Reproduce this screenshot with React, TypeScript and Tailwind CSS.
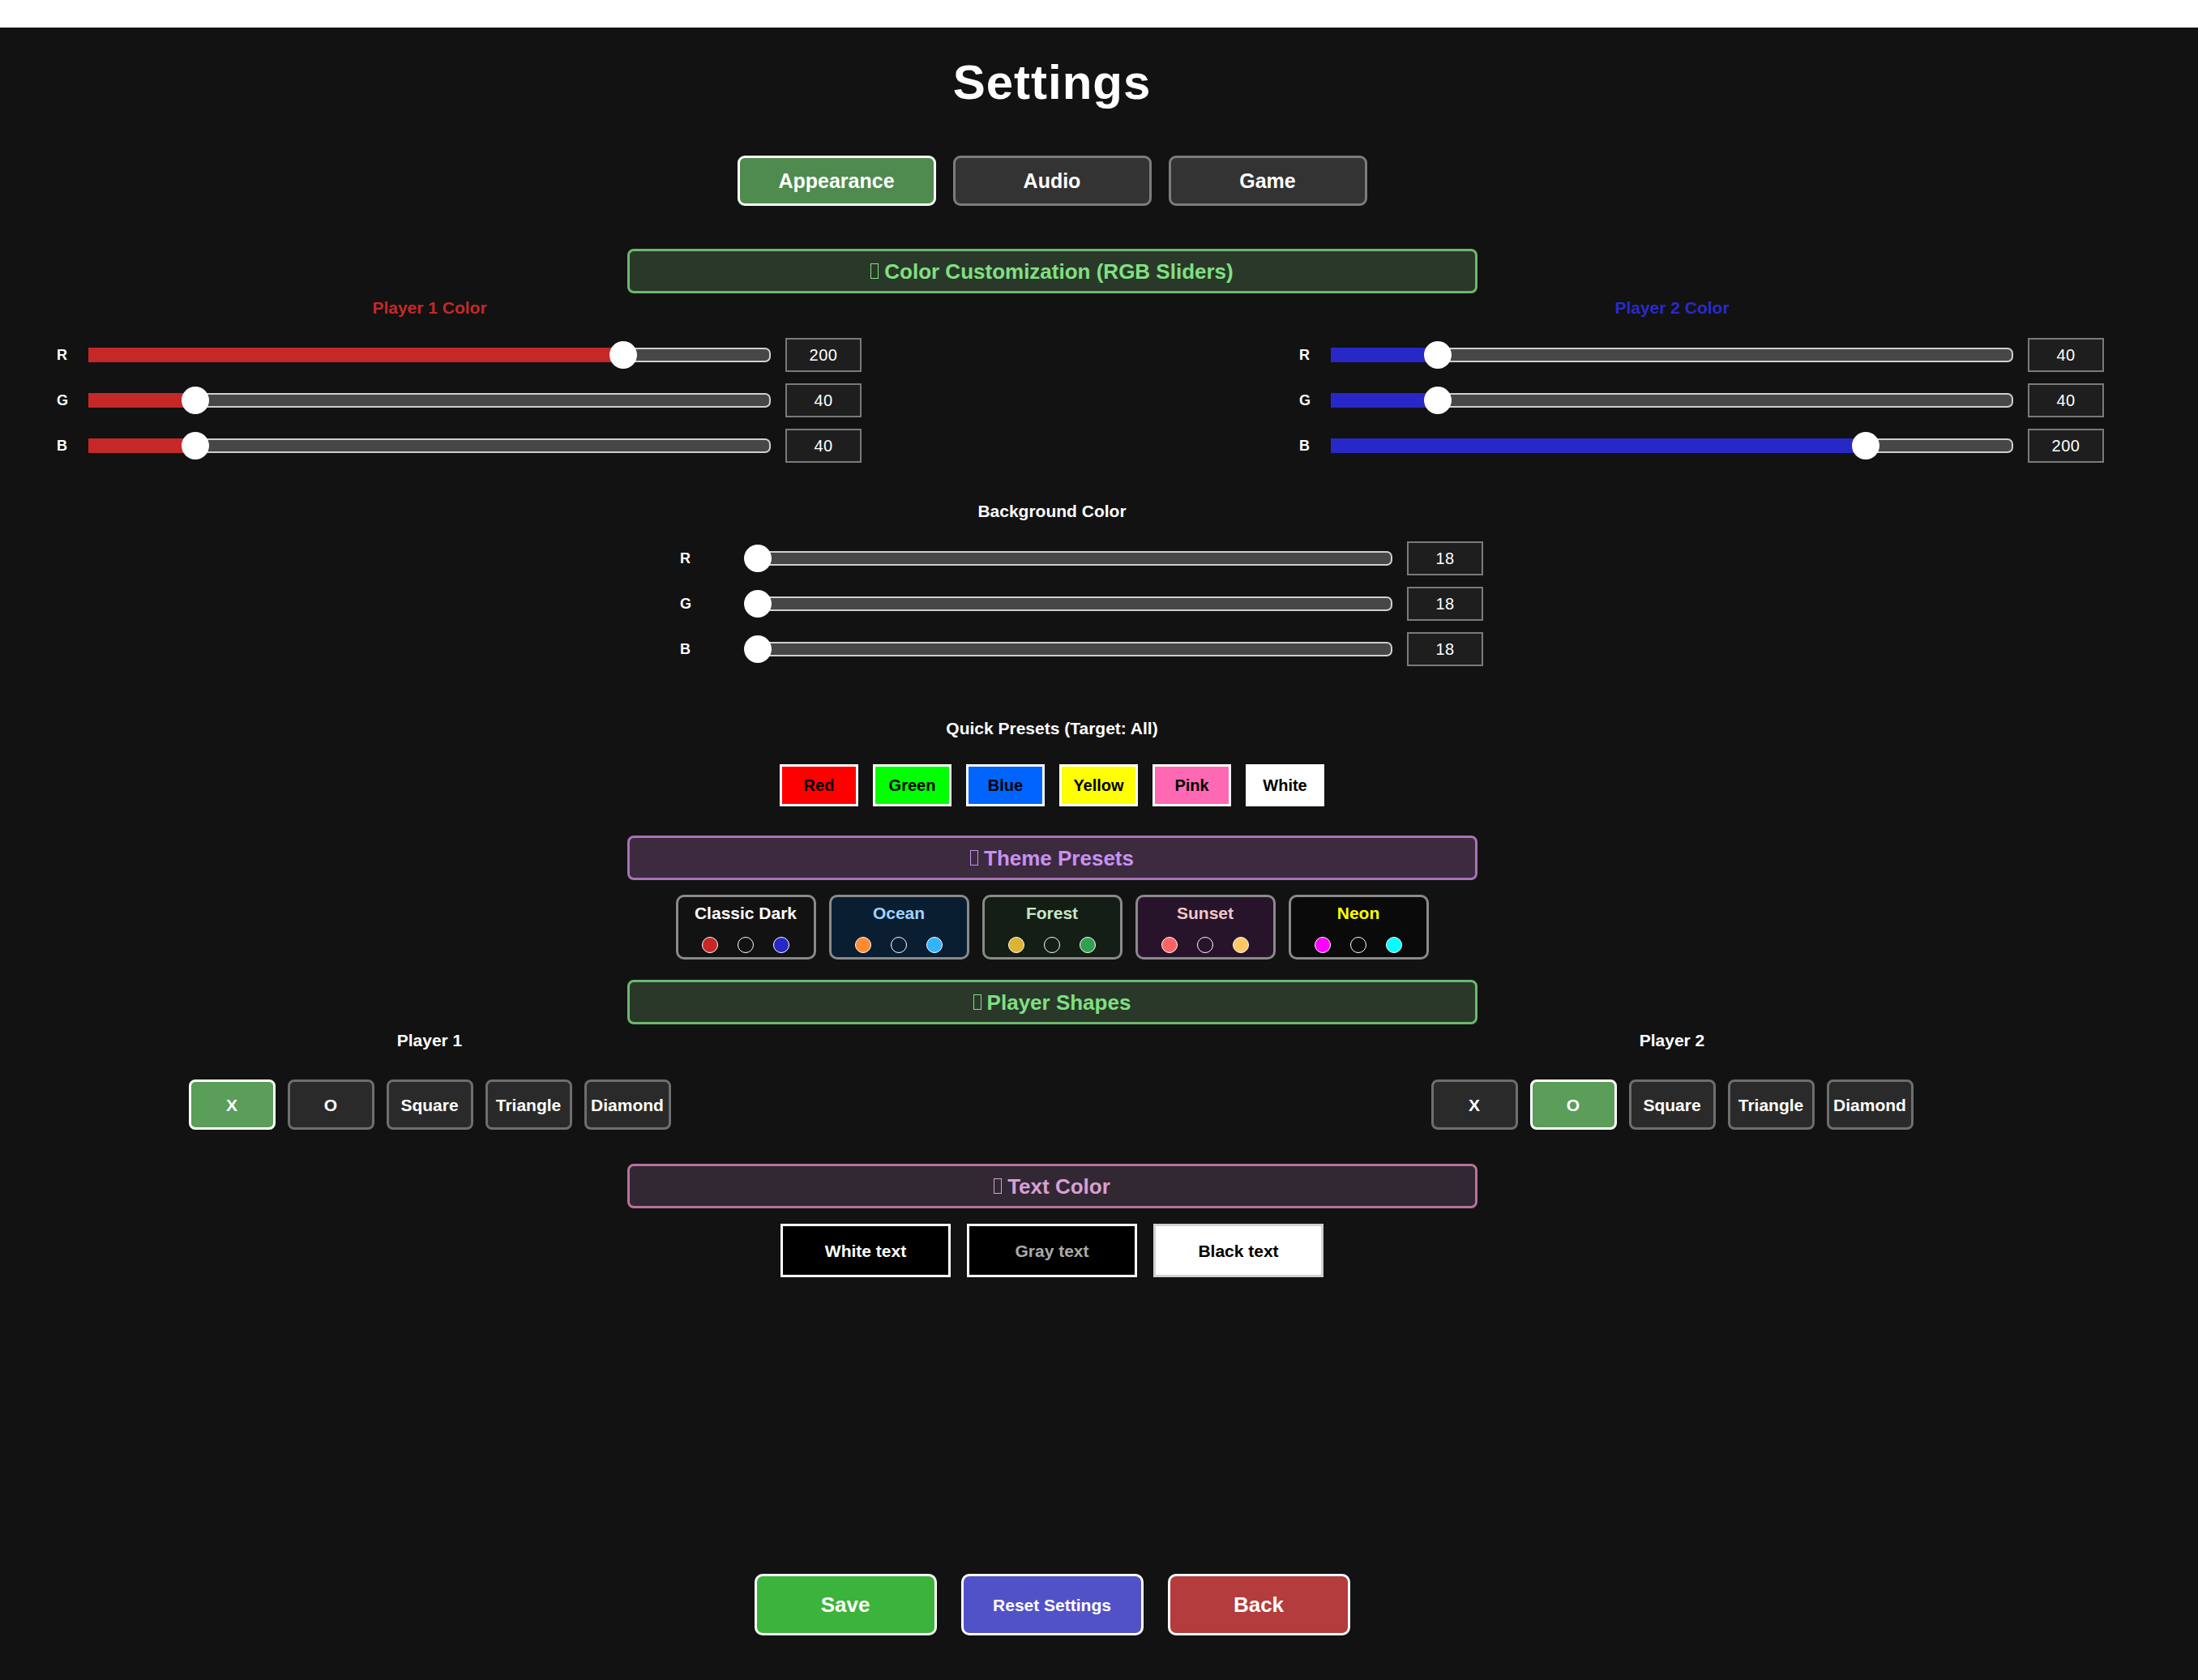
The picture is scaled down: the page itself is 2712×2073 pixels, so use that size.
import type { ReactNode } from "react";

const FONT = "font-['Liberation_Sans',Arial,sans-serif]";

const tabs = [
  { label: "Appearance", active: true },
  { label: "Audio", active: false },
  { label: "Game", active: false },
];

const presets = [
  { label: "Red", cls: "bg-[#ff0000]" },
  { label: "Green", cls: "bg-[#00ff00]" },
  { label: "Blue", cls: "bg-[#0064ff]" },
  { label: "Yellow", cls: "bg-[#ffff00]" },
  { label: "Pink", cls: "bg-[#ff69b4]" },
  { label: "White", cls: "bg-white" },
];

const themes = [
  { name: "Classic Dark", bg: "bg-[#121212]", text: "text-white", dots: ["bg-[#c62828]", "bg-[#121212]", "bg-[#2828c8]"] },
  { name: "Ocean", bg: "bg-[#0a1e32]", text: "text-[#a0d2ff]", dots: ["bg-[#ff8c32]", "bg-[#0a1e32]", "bg-[#32b4ff]"] },
  { name: "Forest", bg: "bg-[#141e14]", text: "text-[#c8e6c8]", dots: ["bg-[#dcb432]", "bg-[#141e14]", "bg-[#32a050]"] },
  { name: "Sunset", bg: "bg-[#28142a]", text: "text-[#f0c8c8]", dots: ["bg-[#ff6464]", "bg-[#28142a]", "bg-[#ffc864]"] },
  { name: "Neon", bg: "bg-[#0a0a0a]", text: "text-[#ffff00]", dots: ["bg-[#ff00ff]", "bg-[#0a0a0a]", "bg-[#00ffff]"] },
];

const shapes = ["X", "O", "Square", "Triangle", "Diamond"];

function SectionHeader({ title, tone, className }: { title: string; tone: "green" | "purple" | "pink"; className: string }) {
  const styles = {
    green: "border-[#6cb86c] bg-[#2a382a] text-[#80e080]",
    purple: "border-[#a872b8] bg-[#3c2a3e] text-[#c891f0]",
    pink: "border-[#b8729c] bg-[#322833] text-[#d8a0d4]",
  }[tone];
  return (
    <div className={`flex h-[55px] w-[1049px] items-center justify-center rounded-[8px] border-[3px] ${styles} ${className}`}>
      <span className="mr-[7px] inline-block h-[19px] w-[10px] border-[1.5px] border-current" />
      <span className="text-[26px] leading-none font-bold">{title}</span>
    </div>
  );
}

function SliderRow({
  label,
  value,
  pos,
  fill,
  labelW,
  trackW,
}: {
  label: string;
  value: number;
  pos: number;
  fill: string;
  labelW: string;
  trackW: string;
}) {
  return (
    <div className="flex h-[42px] items-center">
      <span className={`${labelW} text-[18px] leading-none font-bold text-white`}>{label}</span>
      <div className={`relative h-[18px] ${trackW}`}>
        <div className="absolute inset-0 rounded-r-[7px] border-y-2 border-r-2 border-[#cfcfcf] bg-[#474747]" />
        <div className={`absolute inset-y-0 left-0 ${fill}`} style={{ width: pos }} />
        <div
          className="absolute top-1/2 h-[34px] w-[34px] -translate-x-1/2 -translate-y-1/2 rounded-full bg-white"
          style={{ left: pos }}
        />
      </div>
      <div className="ml-[18px] flex h-[42px] w-[94px] items-center justify-center border-2 border-[#7a7a7a] bg-[#1e1e1e] text-[20px] leading-none tracking-[0.5px] text-white">
        {value}
      </div>
    </div>
  );
}

function PlayerColumn({ children }: { children: ReactNode }) {
  return <div className="w-[993px] pl-[39px]"><div className="flex w-[842px] flex-col items-center">{children}</div></div>;
}

function ColorBlock({ title, titleCls, fill, values }: { title: string; titleCls: string; fill: string; values: number[] }) {
  return (
    <div className="flex w-[993px] flex-col">
      <div className="ml-[39px] w-[842px] text-center">
        <span className={`text-[21px] leading-none font-bold ${titleCls}`}>{title}</span>
      </div>
      <div className="mt-[23px] flex flex-col gap-[14px]">
        {["R", "G", "B"].map((c, i) => (
          <SliderRow
            key={c}
            label={c}
            value={values[i]}
            pos={(values[i] / 255) * 842}
            fill={fill}
            labelW="w-[39px]"
            trackW="w-[842px]"
          />
        ))}
      </div>
    </div>
  );
}

function ShapePicker({ title, selected }: { title: string; selected: string }) {
  return (
    <PlayerColumn>
      <span className="text-[21px] leading-none font-bold text-white">{title}</span>
      <div className="mt-[38px] flex gap-[15px]">
        {shapes.map((s) => (
          <div
            key={s}
            className={`flex h-[62px] w-[107px] items-center justify-center rounded-[8px] border-[3px] text-[21px] leading-none font-bold text-white ${
              s === selected ? "border-white bg-[#5a9e5a]" : "border-[#6e6e6e] bg-[#2a2a2a]"
            }`}
          >
            {s}
          </div>
        ))}
      </div>
    </PlayerColumn>
  );
}

export default function App() {
  return (
    <div className={`min-h-screen bg-[#121212] ${FONT}`}>
      <div className="h-[34px] bg-white" />
      <div className="flex w-[2596px] flex-col items-center">
        <h1 className="mt-[38px] text-[60px] leading-none font-bold tracking-[1px] text-white">Settings</h1>

        <div className="mt-[60px] flex gap-[21px]">
          {tabs.map((t) => (
            <div
              key={t.label}
              className={`flex h-[62px] w-[245px] items-center justify-center rounded-[9px] border-[3px] text-[25px] leading-none font-bold text-white ${
                t.active ? "border-white bg-[#4f8a4f]" : "border-[#7c7c7c] bg-[#333333]"
              }`}
            >
              {t.label}
            </div>
          ))}
        </div>

        <SectionHeader title="Color Customization (RGB Sliders)" tone="green" className="mt-[53px]" />

        <div className="mt-[7px] flex gap-[540px] self-stretch pl-[70px]">
          <ColorBlock title="Player 1 Color" titleCls="text-[#c62828]" fill="bg-[#c62828]" values={[200, 40, 40]} />
          <ColorBlock title="Player 2 Color" titleCls="text-[#2a2acb]" fill="bg-[#2828c8]" values={[40, 40, 200]} />
        </div>

        <span className="mt-[49px] text-[21px] leading-none font-bold text-white">Background Color</span>
        <div className="mt-[27px] ml-[839px] flex flex-col gap-[14px] self-start">
          {["R", "G", "B"].map((c) => (
            <SliderRow key={c} label={c} value={18} pos={17} fill="bg-[#121212]" labelW="w-[79px]" trackW="w-[800px]" />
          ))}
        </div>

        <span className="mt-[66px] text-[21px] leading-none font-bold text-white">Quick Presets (Target: All)</span>
        <div className="mt-[34px] flex gap-[18px]">
          {presets.map((p) => (
            <div
              key={p.label}
              className={`flex h-[52px] w-[97px] items-center justify-center border-[3px] border-white text-[20px] leading-none font-bold text-black ${p.cls}`}
            >
              {p.label}
            </div>
          ))}
        </div>

        <SectionHeader title="Theme Presets" tone="purple" className="mt-[36px]" />
        <div className="mt-[18px] flex gap-[16px]">
          {themes.map((t) => (
            <div
              key={t.name}
              className={`flex h-[80px] w-[173px] flex-col items-center rounded-[10px] border-[3px] border-[#8a8a8a] pt-[9px] ${t.bg}`}
            >
              <span className={`text-[21px] leading-none font-bold ${t.text}`}>{t.name}</span>
              <div className="mt-[19px] flex gap-[24px]">
                {t.dots.map((d, i) => (
                  <span key={i} className={`h-[20px] w-[20px] rounded-full border border-white ${d}`} />
                ))}
              </div>
            </div>
          ))}
        </div>

        <SectionHeader title="Player Shapes" tone="green" className="mt-[25px]" />
        <div className="mt-[9px] flex gap-[540px] self-stretch pl-[70px]">
          <ShapePicker title="Player 1" selected="X" />
          <ShapePicker title="Player 2" selected="O" />
        </div>

        <SectionHeader title="Text Color" tone="pink" className="mt-[42px]" />
        <div className="mt-[19px] flex gap-[20px]">
          <div className="flex h-[66px] w-[210px] items-center justify-center border-[3px] border-white bg-black text-[21px] leading-none font-bold text-white">
            White text
          </div>
          <div className="flex h-[66px] w-[210px] items-center justify-center border-[3px] border-white bg-black text-[21px] leading-none font-bold text-[#aaaaaa]">
            Gray text
          </div>
          <div className="flex h-[66px] w-[210px] items-center justify-center border-[3px] border-[#d0d0d0] bg-white text-[21px] leading-none font-bold text-black">
            Black text
          </div>
        </div>

        <div className="mt-[366px] flex gap-[30px]">
          <div className="flex h-[76px] w-[225px] items-center justify-center rounded-[10px] border-[3px] border-white bg-[#3cb33c] text-[26px] leading-none font-bold text-white">
            Save
          </div>
          <div className="flex h-[76px] w-[225px] items-center justify-center rounded-[10px] border-[3px] border-white bg-[#5252c8] text-[21px] leading-none font-bold text-white">
            Reset Settings
          </div>
          <div className="flex h-[76px] w-[225px] items-center justify-center rounded-[10px] border-[3px] border-white bg-[#b43c3c] text-[26px] leading-none font-bold text-white">
            Back
          </div>
        </div>
      </div>
    </div>
  );
}
